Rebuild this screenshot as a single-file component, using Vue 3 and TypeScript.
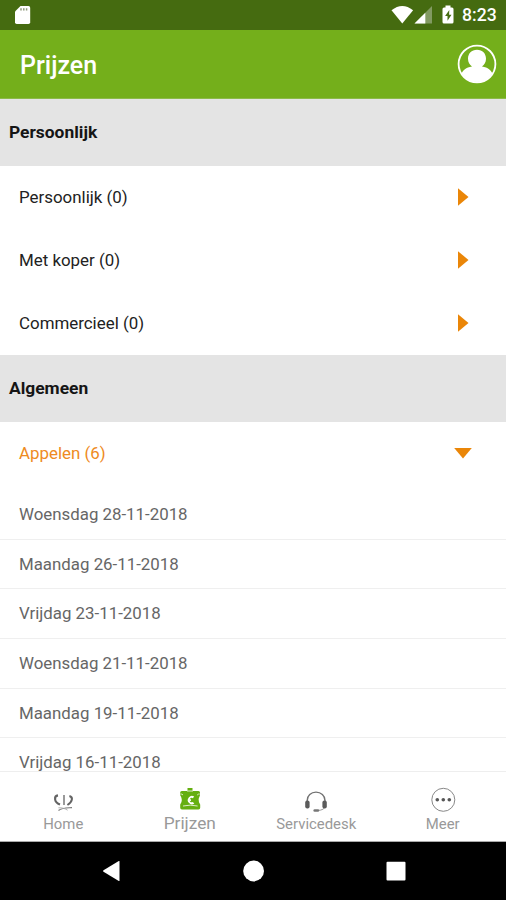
<script setup lang="ts">
import { ref } from 'vue'

interface Category {
  name: string
  count: number
}

const personal: Category[] = [
  { name: 'Persoonlijk', count: 0 },
  { name: 'Met koper', count: 0 },
  { name: 'Commercieel', count: 0 },
]

const general: Category = { name: 'Appelen', count: 6 }
const open = ref(true)

const dates: string[] = [
  'Woensdag 28-11-2018',
  'Maandag 26-11-2018',
  'Vrijdag 23-11-2018',
  'Woensdag 21-11-2018',
  'Maandag 19-11-2018',
  'Vrijdag 16-11-2018',
]
</script>

<template>
  <div class="screen">
    <div class="status">
      <svg class="sd" width="18" height="20" viewBox="0 0 18 20">
        <path d="M6.5 1H14.5Q16.2 1 16.2 2.7V17.2Q16.2 19 14.5 19H2.7Q1 19 1 17.2V6.5Z" fill="#fff" />
        <path d="M7 3.3V5.6M9.8 3.3V5.6M12.6 3.3V5.6" stroke="#8f9a7c" stroke-width="1.5" />
      </svg>
      <svg class="signals" width="68" height="22" viewBox="0 0 68 22">
        <path d="M1.5 6.3Q12.3 -2.3 23.1 6.3L12.3 19.6Z" fill="#fff" />
        <path d="M42 2V19.5H24.5Z" fill="#829a62" />
        <path d="M35.3 8.7V19.5H24.5Z" fill="#fff" />
        <path d="M55.5 1.5H60.5V3.5H62Q63.5 3.5 63.5 5V18Q63.5 19.5 62 19.5H54Q52.5 19.5 52.5 18V5Q52.5 3.5 54 3.5H55.5Z" fill="#fff" />
        <path d="M59.3 6L55.1 12H57.5V16.8L61.5 10.8H59.1Z" fill="#456b10" />
      </svg>
      <span class="clock">8:23</span>
    </div>

    <header class="header">
      <h1>Prijzen</h1>
      <svg class="avatar" width="40" height="40" viewBox="0 0 40 40">
        <defs>
          <clipPath id="face"><circle cx="20" cy="20" r="18" /></clipPath>
        </defs>
        <circle cx="20" cy="20" r="18.4" fill="none" stroke="#fff" stroke-width="1.8" />
        <path
          clip-path="url(#face)"
          d="M11 14.7C11 9.5 14.5 5.7 20 5.7S29 9.5 29 14.7C29 18.2 27.4 20.8 25 22.5C31.2 23.3 34 26.2 36 30.6V40H4V30.6C6 26.2 8.8 23.3 15 22.5C12.6 20.8 11 18.2 11 14.7Z"
          fill="#fff"
        />
      </svg>
    </header>

    <main class="content">
      <h2 class="section">Persoonlijk</h2>
      <div v-for="item in personal" :key="item.name" class="row">
        <span>{{ item.name }} ({{ item.count }})</span>
        <svg class="arrow" width="20" height="20" viewBox="0 0 20 20">
          <path d="M5 1.2L15.5 10L5 18.8Z" fill="#ea8608" />
        </svg>
      </div>

      <h2 class="section">Algemeen</h2>
      <div class="row active" @click="open = !open">
        <span>{{ general.name }} ({{ general.count }})</span>
        <svg class="arrow" width="20" height="20" viewBox="0 0 20 20">
          <path d="M1.2 5H18.8L10 15.5Z" fill="#ea8608" />
        </svg>
      </div>
      <ul v-if="open" class="dates">
        <li v-for="date in dates" :key="date">{{ date }}</li>
      </ul>
    </main>

    <nav class="tabs">
      <div class="tab">
        <svg width="26" height="26" viewBox="0 0 26 26" fill="none" stroke="#646464">
          <path d="M8 8.4C3.8 9 3.8 15.2 10 17.6" stroke-width="2.1" />
          <path d="M14 8V18" stroke-width="1.3" />
          <path d="M19.4 9C23.4 10 22.6 14.8 17.4 18" stroke-width="2" />
          <path d="M8.5 23.4C12 20.8 15 21 22 20.6" stroke-width="1.2" stroke="#777" />
          <path d="M8.4 20.8C12 20.6 15 21.4 17.6 23.2" stroke-width="0.9" stroke="#aaa" />
        </svg>
        <span>Home</span>
      </div>
      <div class="tab selected">
        <svg width="26" height="26" viewBox="0 0 26 26">
          <path
            d="M10.5 1H15.5V4H21.5Q23 4 23 5.5V8.2Q20.8 12 22 15.2L23.2 17.5V20.8Q23.2 22.4 21.5 22.4H5Q3.2 22.4 3.2 20.8V17.5L4.4 15.2Q5.6 12 3.2 8.2V5.5Q3.2 4 4.8 4H10.5Z"
            fill="#65af10"
          />
          <path d="M10 4H16M3.4 7Q5 6.8 6 8M22.8 7Q21.2 6.8 20.2 8M6 19Q13 17.3 20.6 19" fill="none" stroke="#dcedc8" stroke-width="1" />
          <path d="M17.2 9.5A4.2 4.2 0 1 0 17.3 16.6L15.8 15A2.2 2.2 0 1 1 15.8 11.2Z" fill="#fff" />
          <path d="M11 13.1H14" stroke="#fff" stroke-width="1.6" />
        </svg>
        <span>Prijzen</span>
      </div>
      <div class="tab">
        <svg width="26" height="26" viewBox="0 0 26 26" fill="none">
          <path d="M4.2 14.5V13.4C4.2 8.6 8 5.1 13 5.1S22 8.6 22 13.4V14.5" stroke="#727272" stroke-width="1.4" />
          <path d="M22.3 19C21.8 21.7 19 23.4 15 23.4" stroke="#999" stroke-width="1" />
          <rect x="2.2" y="13.4" width="4.4" height="8" rx="2" fill="#5b5b5b" />
          <rect x="19.4" y="13.4" width="4.4" height="8" rx="2" fill="#5b5b5b" />
          <rect x="10.4" y="22.2" width="5.8" height="2.6" rx="1.3" fill="#777" />
        </svg>
        <span>Servicedesk</span>
      </div>
      <div class="tab">
        <svg width="26" height="26" viewBox="0 0 26 26">
          <circle cx="13.3" cy="12.8" r="11.5" fill="none" stroke="#888" stroke-width="1" />
          <circle cx="7.3" cy="12.8" r="1.8" fill="#555" />
          <circle cx="13.3" cy="12.8" r="1.8" fill="#555" />
          <circle cx="19.3" cy="12.8" r="1.8" fill="#555" />
        </svg>
        <span>Meer</span>
      </div>
    </nav>

    <div class="system">
      <svg width="22" height="22" viewBox="0 0 22 22">
        <path d="M18.5 1.2V20.8Q18.5 21.3 17.8 21L2.5 11.8Q1.5 11 2.5 10.2L17.8 1Q18.5 0.7 18.5 1.2Z" fill="#fff" />
      </svg>
      <svg width="22" height="22" viewBox="0 0 22 22"><circle cx="10.6" cy="11" r="10.4" fill="#fff" /></svg>
      <svg width="22" height="22" viewBox="0 0 22 22"><rect x="1.5" y="1.8" width="19" height="18.8" rx="1" fill="#fff" /></svg>
    </div>
  </div>
</template>

<style>
body {
  margin: 0;
}
</style>

<style scoped>
.screen {
  display: flex;
  flex-direction: column;
  width: 506px;
  height: 900px;
  overflow: hidden;
  background: #fff;
  color: #222;
  font-family: Roboto, "Liberation Sans", sans-serif;
}
.status {
  display: flex;
  align-items: center;
  flex: 0 0 30px;
  padding: 0 9px 0 14px;
  background: #456b10;
  color: #fff;
}
.signals {
  margin-left: auto;
}
.clock {
  margin-left: 4px;
  width: 35px;
  padding-top: 1px;
  font-size: 17.6px;
  font-weight: 500;
  line-height: 29px;
  white-space: nowrap;
}
.header {
  display: flex;
  align-items: center;
  justify-content: space-between;
  box-sizing: border-box;
  flex: 0 0 69px;
  padding: 0 9px 0 20px;
  background: #74af1b;
  border-bottom: 1px solid #8cba48;
  color: #fff;
}
h1 {
  margin: 3px 0 0;
  font-size: 25px;
  font-weight: 500;
  line-height: 30px;
}
.content {
  flex: 0 0 672px;
  overflow: hidden;
}
.section {
  box-sizing: border-box;
  height: 67px;
  margin: 0;
  padding-left: 9px;
  background: #e4e4e4;
  color: #151515;
  font-size: 17.4px;
  font-weight: 700;
  line-height: 67px;
}
.row {
  display: flex;
  align-items: center;
  justify-content: space-between;
  box-sizing: border-box;
  height: 63px;
  padding: 0 33px 1px 19px;
  font-size: 16.9px;
}
.active {
  height: 62px;
  padding-bottom: 0;
  color: #ee8a22;
}
.dates {
  margin: 0;
  padding: 6px 0 0;
  list-style: none;
}
.dates li {
  box-sizing: border-box;
  height: 49.7px;
  padding-left: 19px;
  border-bottom: 1px solid #efefef;
  color: #666;
  font-size: 16.85px;
  line-height: 48.4px;
}
.tabs {
  display: flex;
  box-sizing: border-box;
  flex: 0 0 71px;
  padding-top: 15px;
  border-top: 1px solid #eee;
  border-bottom: 1px solid #aaa;
  background: #fff;
}
.tab {
  display: flex;
  flex: 1;
  flex-direction: column;
  align-items: center;
  color: #999;
  font-size: 14.9px;
  line-height: 22px;
}
.tab span {
  margin-top: 0;
}
.selected {
  font-size: 17.3px;
}
.selected span {
  margin-top: -1px;
}
.system {
  display: flex;
  align-items: center;
  justify-content: space-between;
  flex: 1;
  padding: 0 99px 0 101px;
  background: #000;
}
</style>
